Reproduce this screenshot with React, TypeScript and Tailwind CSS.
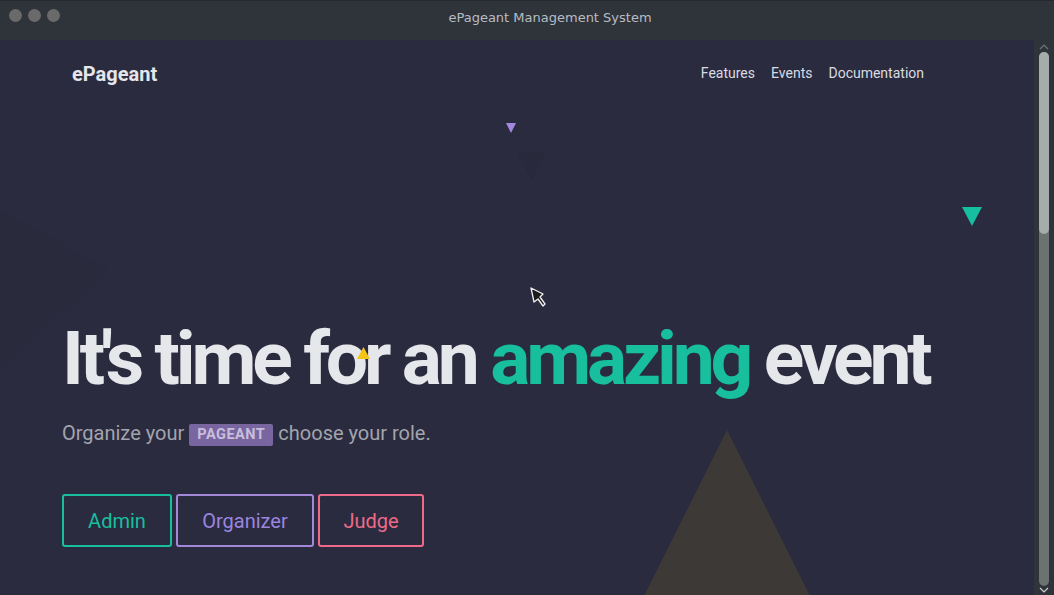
import React from "react";

function Tri({ className, up }: { className: string; up?: boolean }) {
  return (
    <svg className={"absolute " + className} viewBox="0 0 100 100" preserveAspectRatio="none">
      <polygon points={up ? "50,0 100,100 0,100" : "0,0 100,0 50,100"} fill="currentColor" />
    </svg>
  );
}

function Cursor() {
  return (
    <svg className="absolute left-[529px] top-[246px] w-[20px] h-[24px]" viewBox="0 0 20 24">
      <path
        d="M2 2 L14 8 L11 11 L16 18 L14 20 L9 13 L5 16 Z"
        fill="#1c1c1c"
        stroke="#f2f2f2"
        strokeWidth="1.3"
        strokeLinejoin="round"
      />
    </svg>
  );
}

export default function App() {
  return (
    <div className="w-[1054px] h-[595px] flex flex-col overflow-hidden bg-[#2a2b3e] font-['Roboto',sans-serif]">
      <div className="h-[40px] shrink-0 bg-[#2f333a] flex items-center relative border-t border-[#25282d]">
        <div className="flex gap-[6px] pl-[9px] -mt-[10px]">
          <span className="w-[13px] h-[13px] rounded-full bg-[#6a6a6a]" />
          <span className="w-[13px] h-[13px] rounded-full bg-[#6a6a6a]" />
          <span className="w-[13px] h-[13px] rounded-full bg-[#6a6a6a]" />
        </div>
        <div className="absolute left-0 right-0 top-[7px] text-center text-[13px] text-[#b8bcc4] font-['DejaVu_Sans',sans-serif] pl-[46px]">
          ePageant Management System
        </div>
      </div>
      <div className="flex flex-1 min-h-0">
        <main className="relative flex-1 overflow-hidden">
          <Tri className="left-[506px] top-[83px] w-[10px] h-[10px] text-[#a387e0]" />
          <Tri className="left-[518px] top-[112px] w-[27px] h-[28px] text-[#28293a]" />
          <Tri className="left-[962px] top-[167px] w-[20px] h-[19px] text-[#16bfa0]" />
          <Tri up className="left-[644px] top-[390px] w-[166px] h-[166px] text-[#3d3936]" />
          <svg className="absolute left-0 top-[170px] w-[120px] h-[160px]" viewBox="0 0 120 160">
            <polygon points="0,0 110,60 0,160" fill="#292a3b" />
          </svg>
          <Cursor />

          <nav className="relative flex items-center justify-between pl-[72px] pr-[110px] pt-[11px] h-[56px]">
            <div className="text-[20px] font-bold text-[#e4e6eb]">ePageant</div>
            <div className="flex gap-[16px] text-[14px] text-[#d9dbe2]">
              <a>Features</a>
              <a>Events</a>
              <a>Documentation</a>
            </div>
          </nav>

          <section className="pl-[62px] pt-[225px] relative">
            <h1 className="text-[75px] leading-none font-bold tracking-[-4.15px] text-[#e6e7ea]">
              It's time for an <span className="text-[#17bf9f]">amazing</span> event
            </h1>
            <p className="mt-[22px] text-[20px] text-[#a3a4ae] flex items-center gap-[5px]">
              Organize your
              <span className="relative top-[2px] bg-[#79659f] text-[#c7bedc] text-[14.5px] font-bold px-[8px] h-[22px] flex items-center rounded-[2px] tracking-[0.5px]">
                PAGEANT
              </span>
              choose your role.
            </p>
            <div className="flex gap-[4px] mt-[46px]">
              <button className="w-[110px] h-[53px] border-2 border-[#17bf9f] rounded-[3px] text-[20px] text-[#17bf9f]">
                Admin
              </button>
              <button className="w-[138px] h-[53px] border-2 border-[#a388da] rounded-[3px] text-[20px] text-[#9b85e0]">
                Organizer
              </button>
              <button className="w-[106px] h-[53px] border-2 border-[#ee6a88] rounded-[3px] text-[20px] text-[#ee6a88]">
                Judge
              </button>
            </div>
          </section>
          <Tri up className="left-[357px] top-[307px] w-[13px] h-[12px] text-[#f3c417]" />
        </main>
        <div className="w-[20px] shrink-0 bg-[#2f333a] flex flex-col items-center">
          <svg className="w-[10px] h-[8px] mt-[3px]" viewBox="0 0 10 8">
            <path d="M1 6 L5 2 L9 6" stroke="#6f7478" strokeWidth="1.2" fill="none" />
          </svg>
          <div className="w-[10px] flex-1 rounded-full bg-[#6c7172] flex flex-col mt-[1px]">
            <div className="h-[182px] rounded-full bg-[#a6abab]" />
          </div>
          <svg className="w-[10px] h-[8px] mb-[1px]" viewBox="0 0 10 8">
            <path d="M1 2 L5 6 L9 2" stroke="#d0d0d0" strokeWidth="1.2" fill="none" />
          </svg>
        </div>
      </div>
    </div>
  );
}
